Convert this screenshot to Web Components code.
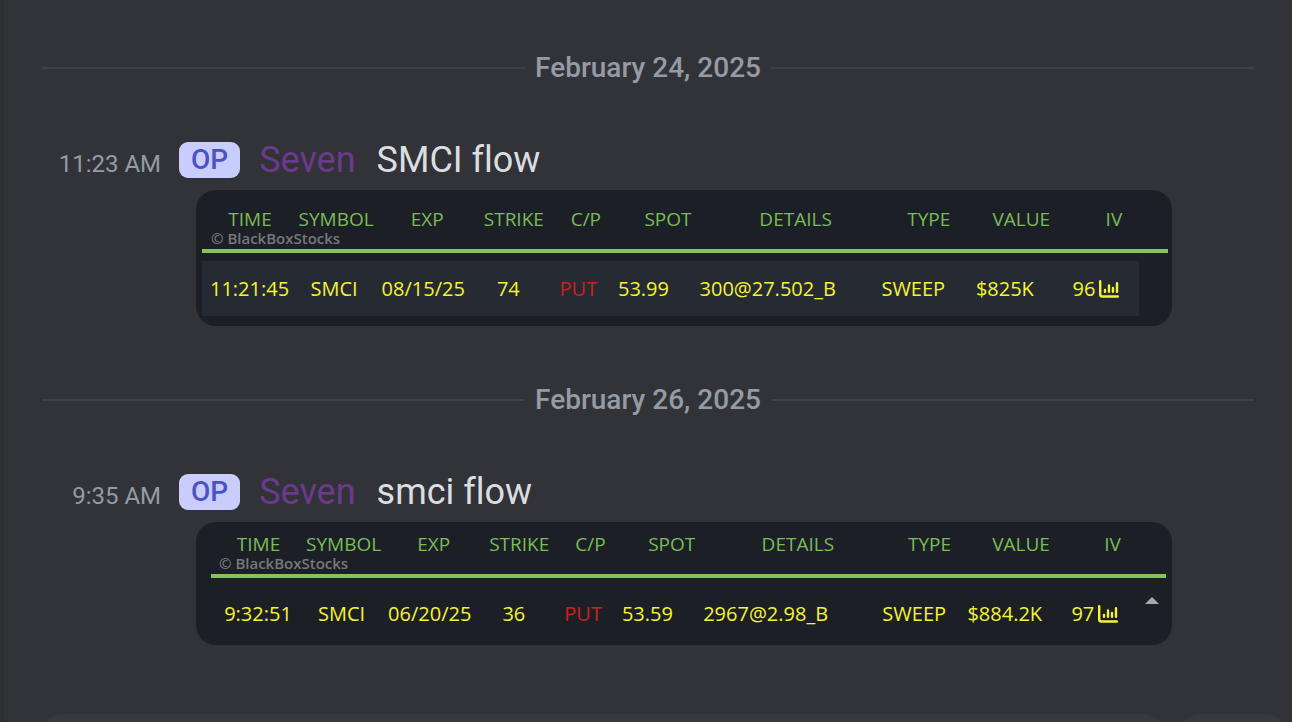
<!DOCTYPE html>
<html lang="en">
<head>
<meta charset="utf-8">
<meta name="viewport" content="width=device-width, initial-scale=1">
<title>Flow chat</title>
<style>
  html, body {
    height: 100%;
  }
  body {
    margin: 0;
    background: #323338;
    font-family: Roboto, "Noto Sans", sans-serif;
  }
</style>
</head>
<body>

<chat-channel>
  <day-divider>February 24, 2025</day-divider>
  <chat-message time="11:23 AM" author="Seven" tag="OP">
    SMCI flow
    <flow-table slot="attachment" highlight
      time="11:21:45" symbol="SMCI" exp="08/15/25" strike="74" cp="PUT" spot="53.99"
      details="300@27.502_B" type="SWEEP" value="$825K" iv="96"></flow-table>
  </chat-message>
  <day-divider>February 26, 2025</day-divider>
  <chat-message time="9:35 AM" author="Seven" tag="OP">
    smci flow
    <flow-table slot="attachment" compact
      time="9:32:51" symbol="SMCI" exp="06/20/25" strike="36" cp="PUT" spot="53.59"
      details="2967@2.98_B" type="SWEEP" value="$884.2K" iv="97"></flow-table>
  </chat-message>
  <chat-composer slot="composer"></chat-composer>
</chat-channel>

<script>
class ChatChannel extends HTMLElement {
  constructor() {
    super();
    const root = this.attachShadow({ mode: "open" });
    root.innerHTML = `
      <style>
        :host {
          display: flex;
          flex-direction: column;
          min-height: 100vh;
          box-sizing: border-box;
          border-left: 4px solid #2e2e33;
        }
        main {
          flex: 1;
          padding: 0 38px;
        }
      </style>
      <main><slot></slot></main>
      <slot name="composer"></slot>
    `;
  }
}

class DayDivider extends HTMLElement {
  constructor() {
    super();
    const root = this.attachShadow({ mode: "open" });
    root.innerHTML = `
      <style>
        :host {
          display: flex;
          align-items: center;
          gap: 10px;
          padding-top: 50px;
          color: #949ba4;
          font-size: 28px;
          font-weight: 500;
          line-height: 36px;
        }
        :host::before, :host::after {
          content: "";
          flex: 1;
          height: 2px;
          background: #3f4147;
        }
      </style>
      <span><slot></slot></span>
    `;
  }
}

class ChatMessage extends HTMLElement {
  constructor() {
    super();
    this.attachShadow({ mode: "open" });
  }

  connectedCallback() {
    this.shadowRoot.innerHTML = `
      <style>
        :host {
          display: block;
          padding: 56px 82px 6px 0;
        }
        .line {
          display: flex;
          align-items: baseline;
          line-height: 36px;
          font-variant-ligatures: none;
        }
        time {
          width: 119px;
          margin-right: 18px;
          text-align: right;
          color: #949ba4;
          font-size: 24px;
          line-height: 28px;
        }
        .tag {
          align-self: center;
          padding: 0 12px;
          margin-right: 19px;
          border-radius: 9px;
          background: #c9cdfb;
          color: #4a52c6;
          font-size: 28px;
          font-weight: 500;
        }
        .author {
          margin-right: 21px;
          color: #6b3a8c;
        }
        .author, .text {
          font-size: 36px;
        }
        .text {
          color: #dbdee1;
        }
        .attachment {
          margin: 12px 0 0 154px;
        }
      </style>
      <div class="line">
        <time>${this.getAttribute("time")}</time>
        <span class="tag">${this.getAttribute("tag")}</span>
        <span class="author">${this.getAttribute("author")}</span>
        <span class="text"><slot></slot></span>
      </div>
      <div class="attachment"><slot name="attachment"></slot></div>
    `;
  }
}

class FlowTable extends HTMLElement {
  constructor() {
    super();
    this.attachShadow({ mode: "open" });
    this.columns = [
      { field: "time", display: "TIME" },
      { field: "symbol", display: "SYMBOL" },
      { field: "exp", display: "EXP" },
      { field: "strike", display: "STRIKE" },
      { field: "cp", display: "C/P" },
      { field: "spot", display: "SPOT" },
      { field: "details", display: "DETAILS" },
      { field: "type", display: "TYPE" },
      { field: "value", display: "VALUE" },
      { field: "iv", display: "IV" }
    ];
  }

  connectedCallback() {
    const compact = this.hasAttribute("compact");
    const head = this.columns.map(c => `<th scope="col">${c.display}</th>`).join("");
    const cells = this.columns.map(c => {
      const icon = c.field === "iv" ? this.chartIcon() : "";
      return `<td class="${c.field}">${this.getAttribute(c.field)}${icon}</td>`;
    }).join("");

    this.shadowRoot.innerHTML = `
      <style>
        :host {
          display: block;
          position: relative;
          padding: 19px 4px 10px 6px;
          border-radius: 20px;
          background: #1d1f26;
          font-family: "Open Sans", "Noto Sans", sans-serif;
        }
        :host([compact]) {
          padding: 12px 6px 4px 15px;
        }
        table {
          display: block;
          font-size: 20px;
        }
        thead, tbody {
          display: block;
        }
        tr {
          display: grid;
        }
        th, td {
          padding: 0;
          text-align: center;
          font-weight: 400;
          white-space: nowrap;
        }
        thead {
          padding-bottom: 20px;
          border-bottom: 4px solid #85c458;
          color: #78bd56;
          font-size: 19px;
          line-height: 20px;
        }
        thead tr {
          grid-template-columns: 96fr 76fr 106fr 67fr 77fr 87fr 168fr 98fr 87fr 98fr 5fr;
        }
        tbody {
          padding-top: 8px;
        }
        tbody tr {
          grid-template-columns: 95fr 74fr 104fr 66fr 74fr 56fr 192fr 99fr 84fr 92fr;
          margin-right: 3%;
          color: #f4f432;
          line-height: 55px;
        }
        :host([highlight]) tbody tr {
          background: #262a32;
        }
        td.cp {
          color: #cf201b;
        }
        td.details {
          padding-left: 28px;
          text-align: left;
        }
        td.iv {
          padding-left: 6px;
        }
        td.iv svg {
          width: 20px;
          height: 18px;
          margin-left: 4px;
          vertical-align: -2px;
        }
        .credit {
          position: absolute;
          top: 39px;
          left: 15px;
          color: #77787b;
          font-size: 15px;
          font-weight: 600;
          line-height: 18px;
        }
        :host([compact]) .credit {
          top: 32px;
          left: 23px;
        }
        .up {
          position: absolute;
          top: 75px;
          right: 13px;
          width: 14px;
          height: 7px;
          fill: #a9aaad;
        }
      </style>
      <table>
        <thead><tr>${head}</tr></thead>
        <tbody><tr>${cells}</tr></tbody>
      </table>
      <div class="credit">© BlackBoxStocks</div>
      ${compact ? `<svg class="up" viewBox="0 0 14 7" aria-hidden="true"><path d="M0 7 7 0l7 7z"/></svg>` : ""}
    `;
  }

  chartIcon() {
    return `<svg viewBox="0 0 20 18" fill="none" stroke="currentColor" stroke-width="2.4" stroke-linecap="round" aria-hidden="true">
      <path d="M1.200 1.200v13a2.300 2.300 0 0 0 2.300 2.300h15.300"/>
      <path d="M6 10v1.800M10 5.500v6.300M14 8v3.800M18 3.200v8.600"/>
    </svg>`;
  }
}

class ChatComposer extends HTMLElement {
  constructor() {
    super();
    const root = this.attachShadow({ mode: "open" });
    // only the top edge of both boxes shows above the fold
    root.innerHTML = `
      <style>
        :host {
          display: flex;
          gap: 18px;
          height: 8px;
          padding: 0 6px 0 38px;
          overflow: hidden;
        }
        div {
          height: 48px;
          border-radius: 20px;
          background: #38393e;
        }
        .box {
          flex: 1;
        }
        .buttons {
          width: 105px;
        }
      </style>
      <div class="box"></div>
      <div class="buttons"></div>
    `;
  }
}

customElements.define("chat-channel", ChatChannel);
customElements.define("day-divider", DayDivider);
customElements.define("chat-message", ChatMessage);
customElements.define("flow-table", FlowTable);
customElements.define("chat-composer", ChatComposer);
</script>
</body>
</html>
